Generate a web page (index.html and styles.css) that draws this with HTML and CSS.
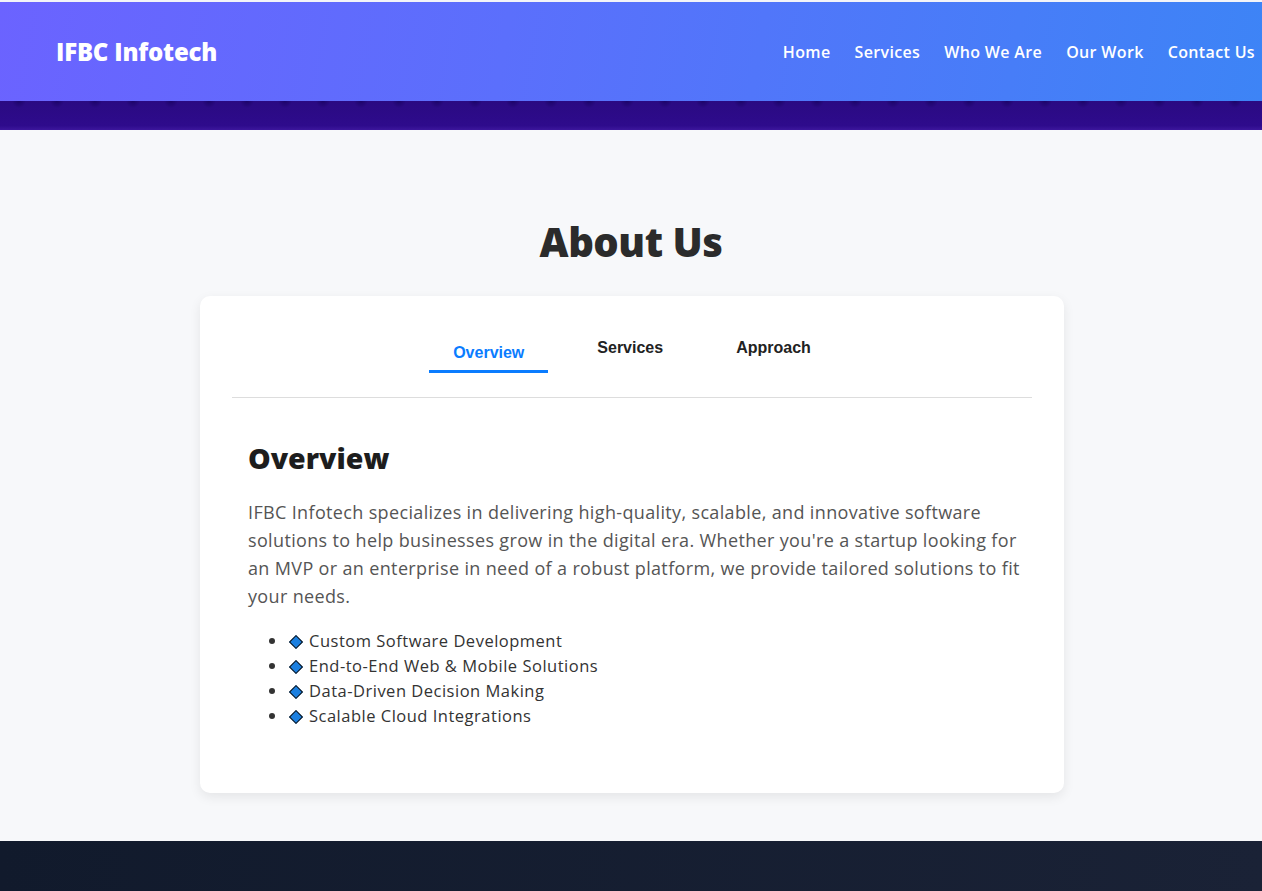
FILE: index.html
```html
<!DOCTYPE html>
<html lang="en">
<head>
<meta charset="utf-8">
<title>IFBC Infotech - About Us</title>
<link rel="stylesheet" href="styles.css">
</head>
<body>
<header class="site-header">
  <div class="brand">IFBC Infotech</div>
  <nav class="nav">
    <a href="#">Home</a>
    <a href="#">Services</a>
    <a href="#">Who We Are</a>
    <a href="#">Our Work</a>
    <a href="#">Contact Us</a>
  </nav>
</header>
<div class="band"></div>
<main class="about">
  <h1 class="about-title">About Us</h1>
  <div class="card">
    <div class="tabs">
      <button class="tab active">Overview</button>
      <button class="tab">Services</button>
      <button class="tab">Approach</button>
    </div>
    <div class="tab-content">
      <h2 class="content-title">Overview</h2>
      <p class="content-text">IFBC Infotech specializes in delivering high-quality, scalable, and innovative software solutions to help businesses grow in the digital era. Whether you're a startup looking for an MVP or an enterprise in need of a robust platform, we provide tailored solutions to fit your needs.</p>
      <ul class="points">
        <li><span class="diamond"></span>Custom Software Development</li>
        <li><span class="diamond"></span>End-to-End Web &amp; Mobile Solutions</li>
        <li><span class="diamond"></span>Data-Driven Decision Making</li>
        <li><span class="diamond"></span>Scalable Cloud Integrations</li>
      </ul>
    </div>
  </div>
</main>
<footer class="footer"></footer>
</body>
</html>
```

FILE: styles.css
```css
* { box-sizing: border-box; }
html, body { margin: 0; padding: 0; }
body {
  background: #f7f8fa;
  font-family: "Open Sans", "DejaVu Sans", sans-serif;
  border-top: 2px solid #f3f4f8;
}
.site-header {
  height: 99px;
  display: flex;
  align-items: center;
  justify-content: space-between;
  padding: 0 7px 0 56px;
  background: linear-gradient(100deg, #6b63ff 0%, #5b6ffc 40%, #3d84f6 100%);
}
.brand {
  color: #fff;
  font-weight: 800;
  font-size: 24px;
  letter-spacing: -0.2px;
}
.nav { display: flex; gap: 24px; }
.nav a {
  color: #fff;
  text-decoration: none;
  font-weight: 600;
  font-size: 16px;
  letter-spacing: 0.35px;
}
.band {
  height: 29px;
  background:
    radial-gradient(ellipse 7px 7px at 50% 0, rgba(20,0,90,0.65), rgba(20,0,90,0) 100%) 0 0 / 38px 16px repeat-x,
    linear-gradient(180deg, #2a0a82 0%, #2e0b8c 85%, #3c169c 100%);
}
.about {
  padding: 88px 0 48px;
  display: flex;
  flex-direction: column;
  align-items: center;
}
.about-title {
  margin: 0 0 30px;
  font-size: 40px;
  line-height: 48px;
  font-weight: 800;
  color: #2b2b2b;
  letter-spacing: -0.5px;
}
.card {
  width: 864px;
  margin-left: 2px;
  background: #fff;
  border-radius: 10px;
  box-shadow: 0 4px 12px rgba(0,0,0,0.08);
  padding: 32px 32px 65px;
}
.tabs {
  display: flex;
  justify-content: center;
  align-items: flex-start;
  gap: 25px;
  padding-bottom: 24px;
  border-bottom: 1px solid #dddddd;
}
.tab {
  font-family: "Liberation Sans", Arial, sans-serif;
  font-weight: 700;
  font-size: 16px;
  line-height: 20px;
  color: #222;
  background: none;
  border: none;
  padding: 10px 24px;
  cursor: pointer;
}
.tab.active {
  color: #0a7cff;
  margin-top: 5px;
  padding-bottom: 7px;
  border-bottom: 3px solid #0a7cff;
}
.tab-content { padding: 40px 0 0 16px; }
.content-title {
  margin: 0 0 20px;
  font-size: 28.5px;
  line-height: 40px;
  font-weight: 800;
  color: #1d1d1d;
}
.content-text {
  margin: 0 0 18px;
  font-size: 18px;
  letter-spacing: 0.35px;
  line-height: 28px;
  color: #555;
}
.points {
  margin: 0;
  padding-left: 40px;
  color: #333;
  font-size: 16.5px;
  letter-spacing: 0.5px;
  line-height: 25px;
}
.points li::marker { color: #333; }
.diamond {
  display: inline-block;
  width: 10px;
  height: 10px;
  margin: 0 8px 1px 3px;
  background: #1b7fe0;
  border: 1px solid #111;
  transform: rotate(45deg);
  vertical-align: middle;
}
.footer {
  height: 50px;
  background: linear-gradient(90deg, #111a2c 0%, #1a2236 100%);
}
```
